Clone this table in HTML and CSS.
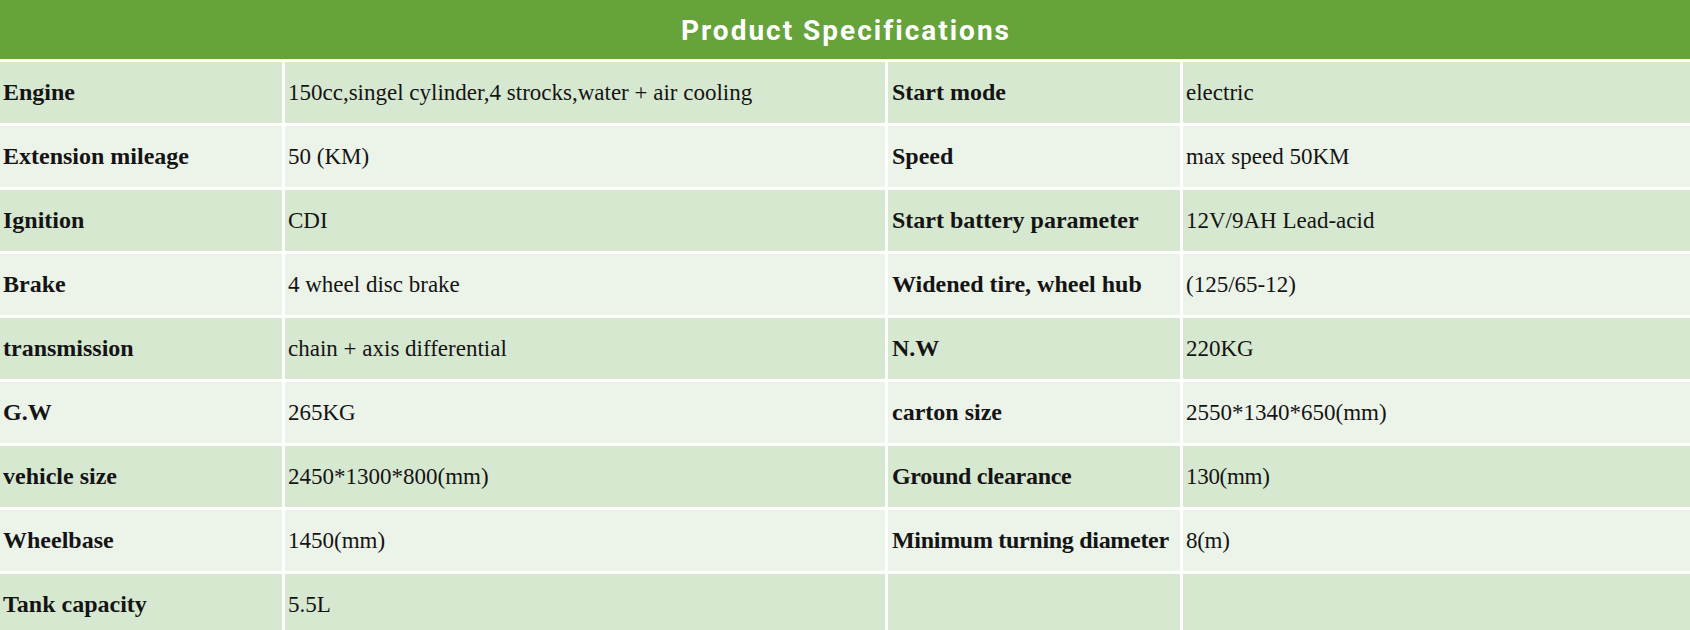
FILE: index.html
```html
<!DOCTYPE html>
<html lang="en">
<head>
<meta charset="utf-8">
<title>Product Specifications</title>
<link rel="stylesheet" href="styles.css">
</head>
<body>
<div class="sheet">
  <div class="title">Product Specifications</div>
  <div class="row dark">
    <div class="cell key">Engine</div>
    <div class="cell">150cc,singel cylinder,4 strocks,water + air cooling</div>
    <div class="cell key">Start mode</div>
    <div class="cell">electric</div>
  </div>
  <div class="row light">
    <div class="cell key">Extension mileage</div>
    <div class="cell">50 (KM)</div>
    <div class="cell key">Speed</div>
    <div class="cell">max speed 50KM</div>
  </div>
  <div class="row dark">
    <div class="cell key">Ignition</div>
    <div class="cell">CDI</div>
    <div class="cell key">Start battery parameter</div>
    <div class="cell">12V/9AH Lead-acid</div>
  </div>
  <div class="row light">
    <div class="cell key">Brake</div>
    <div class="cell">4 wheel disc brake</div>
    <div class="cell key">Widened tire, wheel hub</div>
    <div class="cell">(125/65-12)</div>
  </div>
  <div class="row dark">
    <div class="cell key">transmission</div>
    <div class="cell">chain + axis differential</div>
    <div class="cell key">N.W</div>
    <div class="cell">220KG</div>
  </div>
  <div class="row light">
    <div class="cell key">G.W</div>
    <div class="cell">265KG</div>
    <div class="cell key">carton size</div>
    <div class="cell">2550*1340*650(mm)</div>
  </div>
  <div class="row dark">
    <div class="cell key">vehicle size</div>
    <div class="cell">2450*1300*800(mm)</div>
    <div class="cell key narrow">Ground clearance</div>
    <div class="cell narrow">130(mm)</div>
  </div>
  <div class="row light">
    <div class="cell key">Wheelbase</div>
    <div class="cell">1450(mm)</div>
    <div class="cell key narrow">Minimum turning diameter</div>
    <div class="cell narrow">8(m)</div>
  </div>
  <div class="row dark">
    <div class="cell key">Tank capacity</div>
    <div class="cell">5.5L</div>
    <div class="cell key"></div>
    <div class="cell"></div>
  </div>
</div>
</body>
</html>
```

FILE: styles.css
```css
html, body {
  margin: 0;
  padding: 0;
  background: #ffffff;
}

body {
  width: 1690px;
  height: 630px;
  overflow: hidden;
  font-family: "Liberation Serif", "Times New Roman", serif;
  color: #141414;
}

.sheet {
  display: flex;
  flex-direction: column;
  gap: 3px;
}

.title {
  height: 59px;
  background: #66a33b;
  color: #ffffff;
  display: flex;
  align-items: center;
  justify-content: center;
  font-family: Roboto, "Liberation Sans", sans-serif;
  font-weight: 700;
  font-size: 28px;
  letter-spacing: 2px;
  padding-top: 1px;
  padding-left: 2px;
  box-sizing: border-box;
}

.row {
  display: grid;
  grid-template-columns: 282px 600px 292px 1fr;
  column-gap: 3px;
  height: 61px;
}

.cell {
  display: flex;
  align-items: center;
  padding-left: 3px;
  font-size: 23px;
  white-space: nowrap;
}

.cell.key {
  font-weight: 700;
  font-size: 24px;
}

.row > .cell:nth-child(3) {
  padding-left: 4px;
}

.narrow {
  letter-spacing: -0.3px;
}

.dark .cell {
  background: #d7e8d1;
}

.light .cell {
  background: #ecf3e9;
}
```
